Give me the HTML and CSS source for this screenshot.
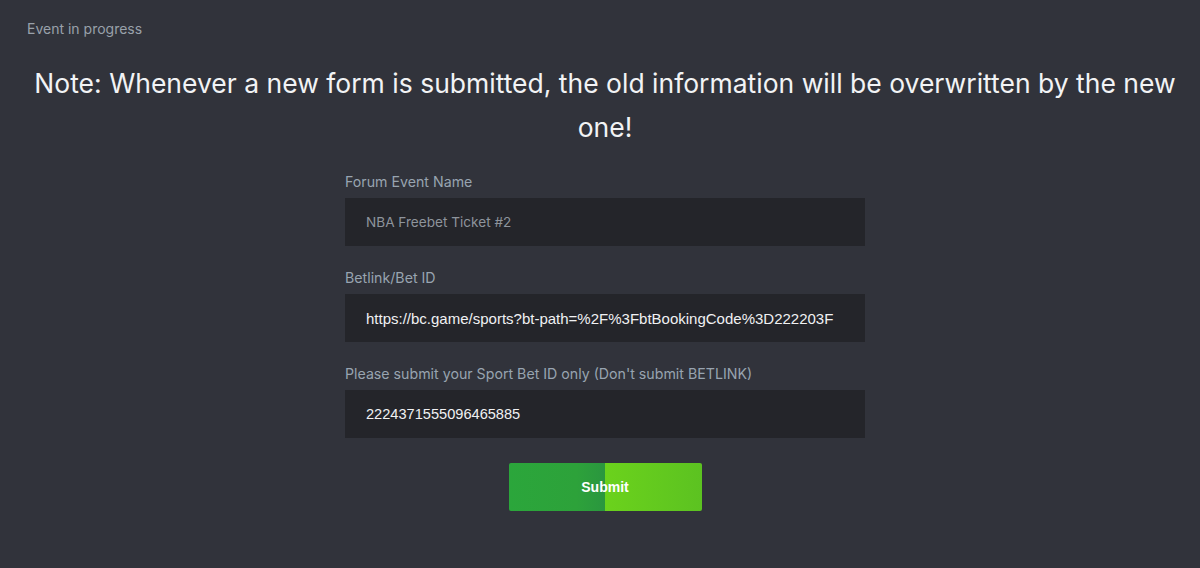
FILE: index.html
```html
<!DOCTYPE html>
<html lang="en">
<head>
<meta charset="utf-8">
<title>Event in progress</title>
<link rel="stylesheet" href="styles.css">
</head>
<body>
<main class="page">
  <div class="status">Event in progress</div>
  <h1 class="note">Note: Whenever a new form is submitted, the old information will be overwritten by the new one!</h1>
  <form class="form">
    <div class="field">
      <label class="label" for="f1">Forum Event Name</label>
      <input class="input placeholder-input" id="f1" type="text" placeholder="NBA Freebet Ticket #2">
    </div>
    <div class="field">
      <label class="label" for="f2">Betlink/Bet ID</label>
      <input class="input value-input url-input" id="f2" type="text" value="https://bc.game/sports?bt-path=%2F%3FbtBookingCode%3D222203F">
    </div>
    <div class="field">
      <label class="label" for="f3">Please submit your Sport Bet ID only (Don't submit BETLINK)</label>
      <input class="input value-input id-input" id="f3" type="text" value="2224371555096465885">
    </div>
    <div class="actions">
      <button class="submit" type="button">Submit</button>
    </div>
  </form>
</main>
</body>
</html>
```
FILE: styles.css
```css
html, body {
  margin: 0;
  padding: 0;
  background: #31333b;
  height: 100%;
}
body {
  font-family: Inter, "Noto Sans", sans-serif;
  color: #eef0f2;
}
.page {
  padding: 19px 10px 0 20px;
  box-sizing: border-box;
  width: 1200px;
}
.status {
  font-size: 14px;
  line-height: 20px;
  color: #99a1aa;
  padding-left: 7px;
}
.note {
  margin: 22px 0 0 0;
  font-size: 26.5px;
  font-weight: 400;
  line-height: 44px;
  text-align: center;
  color: #f2f3f5;
}
.form {
  width: 520px;
  margin: 23px auto 0;
  display: flex;
  flex-direction: column;
}
.field {
  display: flex;
  flex-direction: column;
  margin-bottom: 22px;
}
.label {
  font-size: 14.2px;
  line-height: 20px;
  color: #98a4b0;
  margin-bottom: 6px;
}
.input {
  height: 48px;
  box-sizing: border-box;
  border: none;
  outline: none;
  background: #24252a;
  padding: 0 21px;
  font-size: 14px;
  border-radius: 0;
  color: #f0f1f3;
}
.placeholder-input {
  font-family: Inter, "Noto Sans", sans-serif;
  font-size: 13.6px;
}
.placeholder-input::placeholder {
  color: #8e949c;
  opacity: 1;
}
.value-input {
  font-family: "Liberation Sans", Arial, sans-serif;
}
.url-input {
  font-size: 15px;
}
.id-input {
  font-size: 14.6px;
}
.actions {
  display: flex;
  justify-content: center;
  margin-top: 3px;
}
.submit {
  width: 193px;
  height: 48px;
  border: none;
  border-radius: 2px;
  font-family: "Liberation Sans", Arial, sans-serif;
  font-weight: 700;
  font-size: 14px;
  color: #ffffff;
  background: linear-gradient(90deg, #2ba63b 0%, #2da23a 35%, #2a963f 50%, #6bd21c 50%, #5cc221 100%);
  cursor: pointer;
}
```
